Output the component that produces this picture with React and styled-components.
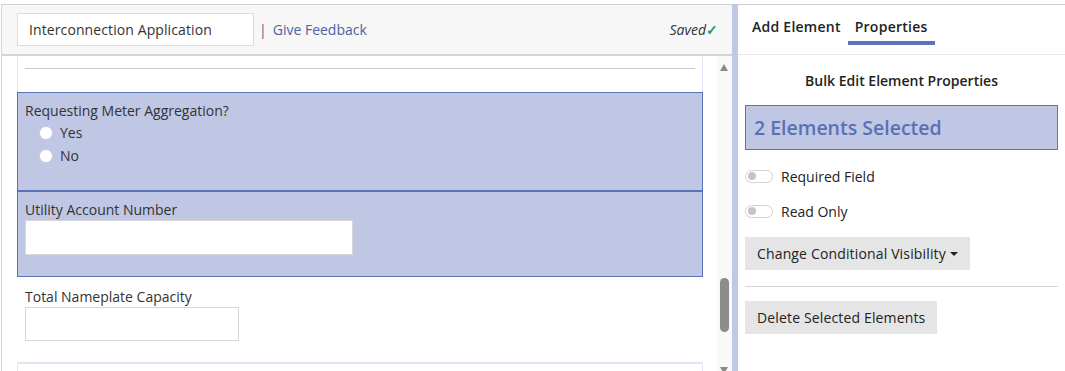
import React from 'react'
import styled, { createGlobalStyle } from 'styled-components'

const GlobalStyle = createGlobalStyle`
  html, body {
    margin: 0;
    padding: 0;
    background: #fff;
  }
  body {
    font-family: "Open Sans", "Liberation Sans", sans-serif;
    font-size: 14px;
    color: #333;
  }
  * { box-sizing: border-box; }
`;

const selBg = '#bfc7e5';
const selBorder = '#5c73b9';

const Page = styled.div`
  display: flex;
  height: 371px;
  padding-top: 4px;
  overflow: hidden;
`;

const Builder = styled.div`
  display: flex;
  flex-direction: column;
  width: 731px;
  margin-left: 1px;
  border-left: 1px solid #d6d6d6;
  border-top: 1px solid #cfcfcf;
`;

const Header = styled.div`
  display: flex;
  align-items: center;
  height: 51px;
  padding: 0 14px 0 15px;
  background: #f7f7f7;
  border-bottom: 2px solid #d4d4d4;
`;

const TitleInput = styled.input`
  width: 237px;
  height: 33px;
  margin-top: -1px;
  padding: 0 11px;
  border: 1px solid #dcdcdc;
  background: #fff;
  font: inherit;
  font-size: 14px;
  letter-spacing: 0.1px;
  color: #333;
  outline: none;
`;

const Feedback = styled.a`
  margin-left: 5px;
  color: #4e62a3;
  font-size: 14px;
  text-decoration: none;
  &::before {
    content: '|';
    margin-right: 6px;
  }
`;

const Saved = styled.span`
  margin-left: auto;
  font-style: italic;
  font-size: 14px;
  color: #333;
  span {
    font-style: normal;
    font-weight: 600;
    color: #1f9d72;
  }
`;

const Body = styled.div`
  flex: 1;
  display: flex;
  min-height: 0;
`;

const Canvas = styled.div`
  flex: 1;
  padding: 0 14px 0 15px;
  overflow: hidden;
`;

const Column = styled.div`
  border-left: 1px solid #dfe4f3;
  border-right: 1px solid #dfe4f3;
  min-height: 100%;
`;

const Divider = styled.div`
  height: 36px;
  padding: 12px 7px 0;
  &::after {
    content: '';
    display: block;
    border-top: 1px solid #cccccc;
  }
`;

const Element = styled.div`
  margin: 0 -1px;
  padding: ${p => (p.$selected ? 8 : 9)}px 7px ${p => p.$pad}px;
  background: ${p => (p.$selected ? selBg : '#fff')};
  border: 1px solid ${p => (p.$selected ? selBorder : 'transparent')};
  border-bottom: ${p => (p.$selected ? `1px solid ${selBorder}` : '2px solid #dfe4f3')};
`;

const Label = styled.div`
  line-height: 20px;
  font-size: 14px;
  color: #333;
`;

const RadioRow = styled.label`
  display: flex;
  align-items: center;
  height: 23px;
  padding-left: 15px;
  color: #333;
  &::before {
    content: '';
    width: 12px;
    height: 12px;
    margin-right: 8px;
    border-radius: 50%;
    background: #fff;
    box-shadow: 0 0 0 0.5px #d8dcea;
  }
`;

const TextBox = styled.div`
  width: ${p => p.$w}px;
  height: ${p => p.$h}px;
  background: #fff;
  border: 1px solid #d6d6d6;
`;

const Scrollbar = styled.div`
  position: relative;
  width: 15px;
  background: #f9f9f9;
`;

const Arrow = styled.div`
  position: absolute;
  left: 3px;
  width: 0;
  height: 0;
  border-left: 4.5px solid transparent;
  border-right: 4.5px solid transparent;
  ${p => (p.$up ? 'top: 8px; border-bottom: 7px solid #8a8a8a;' : 'bottom: -3px; border-top: 7px solid #8a8a8a;')}
`;

const Thumb = styled.div`
  position: absolute;
  left: 3px;
  top: 222px;
  width: 9px;
  height: 54px;
  border-radius: 5px;
  background: #8c8c8c;
`;

const Splitter = styled.div`
  width: 6px;
  background: #c0c8e6;
`;

const Side = styled.div`
  flex: 1;
  display: flex;
  flex-direction: column;
  border-top: 1px solid #cfcfcf;
`;

const Tabs = styled.div`
  display: flex;
  height: 50px;
  padding: 0 7px;
  border-bottom: 1px solid #e8e8e8;
`;

const Tab = styled.div`
  position: relative;
  padding: 12px 7px 0;
  font-weight: 600;
  font-size: 14px;
  letter-spacing: 0.25px;
  color: #222;
  ${p => p.$active && `
    &::after {
      content: '';
      position: absolute;
      left: 0;
      right: 0;
      top: 36px;
      height: 4px;
      background: ${selBorder};
    }
  `}
`;

const Panel = styled.div`
  display: flex;
  flex-direction: column;
  padding: 0 7px;
`;

const PanelTitle = styled.div`
  margin-top: 16px;
  text-align: center;
  font-weight: 600;
  font-size: 14px;
  line-height: 20px;
  color: #222;
`;

const SelectedBox = styled.div`
  height: 45px;
  margin-top: 14px;
  padding: 0 8px;
  display: flex;
  align-items: center;
  background: ${selBg};
  border: 1px solid ${selBorder};
  color: #5a70b5;
  font-size: 19.5px;
  font-weight: 600;
`;

const ToggleRow = styled.label`
  display: flex;
  align-items: center;
  height: 20px;
  margin-top: ${p => p.$mt}px;
  font-size: 14px;
  color: #222;
`;

const Toggle = styled.span`
  position: relative;
  width: 28px;
  height: 13px;
  margin-right: 8px;
  border: 1px solid #d2d2d2;
  border-radius: 7px;
  background: #fff;
  &::after {
    content: '';
    position: absolute;
    left: 2px;
    top: 1.5px;
    width: 8px;
    height: 8px;
    border-radius: 50%;
    background: #c4c4c4;
  }
`;

const Button = styled.button`
  align-self: flex-start;
  height: 33px;
  margin-top: ${p => p.$mt}px;
  padding: 0 12px;
  border: none;
  background: #e5e5e5;
  font: inherit;
  font-size: 14px;
  letter-spacing: 0.15px;
  color: #222;
  display: flex;
  align-items: center;
`;

const Caret = styled.span`
  margin-left: 4px;
  border-left: 4px solid transparent;
  border-right: 4px solid transparent;
  border-top: 4px solid #222;
`;

const Rule = styled.hr`
  width: 100%;
  margin: 16px 0 0;
  border: none;
  border-top: 1px solid #d4d4d4;
`;

export default function App() {
  return (
    <>
      <GlobalStyle />
      <Page>
        <Builder>
          <Header>
            <TitleInput defaultValue="Interconnection Application" />
            <Feedback href="#">Give Feedback</Feedback>
            <Saved>Saved<span>✓</span></Saved>
          </Header>
          <Body>
            <Canvas>
              <Column>
                <Divider />
                <Element $selected $pad={23}>
                  <Label>Requesting Meter Aggregation?</Label>
                  <RadioRow>Yes</RadioRow>
                  <RadioRow>No</RadioRow>
                </Element>
                <Element $selected $pad={21}>
                  <Label>Utility Account Number</Label>
                  <TextBox $w={328} $h={35} />
                </Element>
                <Element $pad={21}>
                  <Label>Total Nameplate Capacity</Label>
                  <TextBox $w={214} $h={34} />
                </Element>
              </Column>
            </Canvas>
            <Scrollbar>
              <Arrow $up />
              <Thumb />
              <Arrow />
            </Scrollbar>
          </Body>
        </Builder>
        <Splitter />
        <Side>
          <Tabs>
            <Tab>Add Element</Tab>
            <Tab $active>Properties</Tab>
          </Tabs>
          <Panel>
            <PanelTitle>Bulk Edit Element Properties</PanelTitle>
            <SelectedBox>2 Elements Selected</SelectedBox>
            <ToggleRow $mt={16}><Toggle />Required Field</ToggleRow>
            <ToggleRow $mt={15}><Toggle />Read Only</ToggleRow>
            <Button $mt={16}>Change Conditional Visibility<Caret /></Button>
            <Rule />
            <Button $mt={14}>Delete Selected Elements</Button>
          </Panel>
        </Side>
      </Page>
    </>
  )
}
